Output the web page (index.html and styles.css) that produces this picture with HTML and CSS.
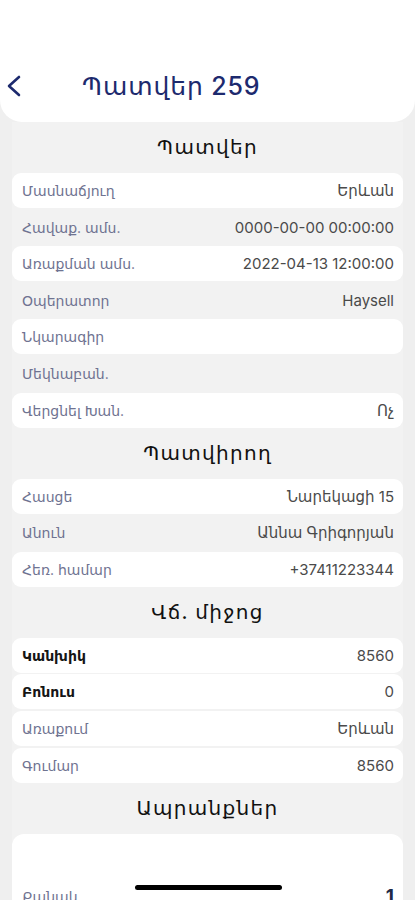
FILE: index.html
```html
<!DOCTYPE html>
<html lang="hy">
<head>
<meta charset="utf-8">
<title>Պատվեր 259</title>
<link rel="stylesheet" href="styles.css">
</head>
<body>
<div class="page">
  <header class="header">
    <div class="bar">
      <svg class="back" width="20" height="24" viewBox="0 0 20 24"><polyline points="12,3 2,12 12,21" fill="none" stroke="#1d2a6e" stroke-width="2.6" stroke-linecap="round" stroke-linejoin="round"/></svg>
      <h1 class="title">Պատվեր 259</h1>
    </div>
  </header>

  <main class="content">
    <h2 class="section">Պատվեր</h2>
    <div class="rows">
      <div class="row alt"><span class="label">Մասնաճյուղ</span><span class="value">Երևան</span></div>
      <div class="row"><span class="label">Հավաք. ամս.</span><span class="value">0000-00-00 00:00:00</span></div>
      <div class="row alt"><span class="label">Առաքման ամս.</span><span class="value">2022-04-13 12:00:00</span></div>
      <div class="row"><span class="label">Օպերատոր</span><span class="value">Haysell</span></div>
      <div class="row alt"><span class="label">Նկարագիր</span><span class="value"></span></div>
      <div class="row"><span class="label">Մեկնաբան.</span><span class="value"></span></div>
      <div class="row alt"><span class="label">Վերցնել Խան.</span><span class="value">Ոչ</span></div>
    </div>

    <h2 class="section">Պատվիրող</h2>
    <div class="rows">
      <div class="row alt"><span class="label">Հասցե</span><span class="value">Նարեկացի 15</span></div>
      <div class="row"><span class="label">Անուն</span><span class="value">Աննա Գրիգորյան</span></div>
      <div class="row alt"><span class="label">Հեռ. համար</span><span class="value">+37411223344</span></div>
    </div>

    <h2 class="section">Վճ. միջոց</h2>
    <div class="rows">
      <div class="row alt"><span class="label strong">Կանխիկ</span><span class="value">8560</span></div>
      <div class="row alt"><span class="label strong">Բոնուս</span><span class="value">0</span></div>
      <div class="row alt"><span class="label">Առաքում</span><span class="value">Երևան</span></div>
      <div class="row alt"><span class="label">Գումար</span><span class="value">8560</span></div>
    </div>

    <h2 class="section">Ապրանքներ</h2>
    <div class="card">
      <div class="card-row"><span class="label">Քանակ</span><span class="qty">1</span></div>
    </div>
  </main>
  <div class="home-indicator"></div>
</div>
</body>
</html>
```
FILE: styles.css
```css
* { box-sizing: border-box; }
html, body { margin: 0; padding: 0; }
body {
  background: #efefef;
  font-family: "Inter", "DejaVu Sans", sans-serif;
  color: #222;
}
.page {
  position: relative;
  width: 415px;
  min-height: 900px;
}
.header {
  background: #ffffff;
  height: 122px;
  border-radius: 0 0 22px 22px;
  padding-top: 66px;
}
.bar {
  display: flex;
  align-items: center;
  height: 40px;
}
.back {
  margin-left: 7px;
  width: 20px;
  height: 24px;
}
.title {
  margin: 0 0 0 55px;
  font-size: 25px;
  font-weight: 500;
  letter-spacing: 0.9px;
  color: #1d2a6e;
  line-height: 40px;
}
.content {
  margin: 0 12px;
  background: #f2f2f2;
  padding-bottom: 40px;
}
.section {
  margin: 0;
  height: 51px;
  line-height: 51px;
  text-align: center;
  font-size: 20px;
  font-weight: 500;
  color: #111;
  letter-spacing: 1.3px;
}
.rows {
  display: flex;
  flex-direction: column;
  gap: 1.6px;
}
.row {
  display: flex;
  justify-content: space-between;
  align-items: center;
  height: 35px;
  padding: 0 9px 0 10px;
  border-radius: 9px;
}
.row.alt { background: #ffffff; }
.label {
  font-size: 14px;
  color: #6f7391;
}
.label.strong {
  font-size: 14px;
  font-weight: 700;
  color: #151515;
}
.value {
  font-size: 15px;
  color: #4a4a4a;
}
.card {
  background: #ffffff;
  border-radius: 12px;
  padding-top: 48px;
  height: 120px;
}
.card-row {
  display: flex;
  justify-content: space-between;
  align-items: center;
  padding: 0 9px 0 10px;
  height: 30px;
}
.qty {
  font-size: 19px;
  font-weight: 700;
  color: #1f2a48;
}
.home-indicator {
  position: absolute;
  left: 135px;
  top: 885px;
  width: 147px;
  height: 5px;
  border-radius: 3px;
  background: #000;
}
```
